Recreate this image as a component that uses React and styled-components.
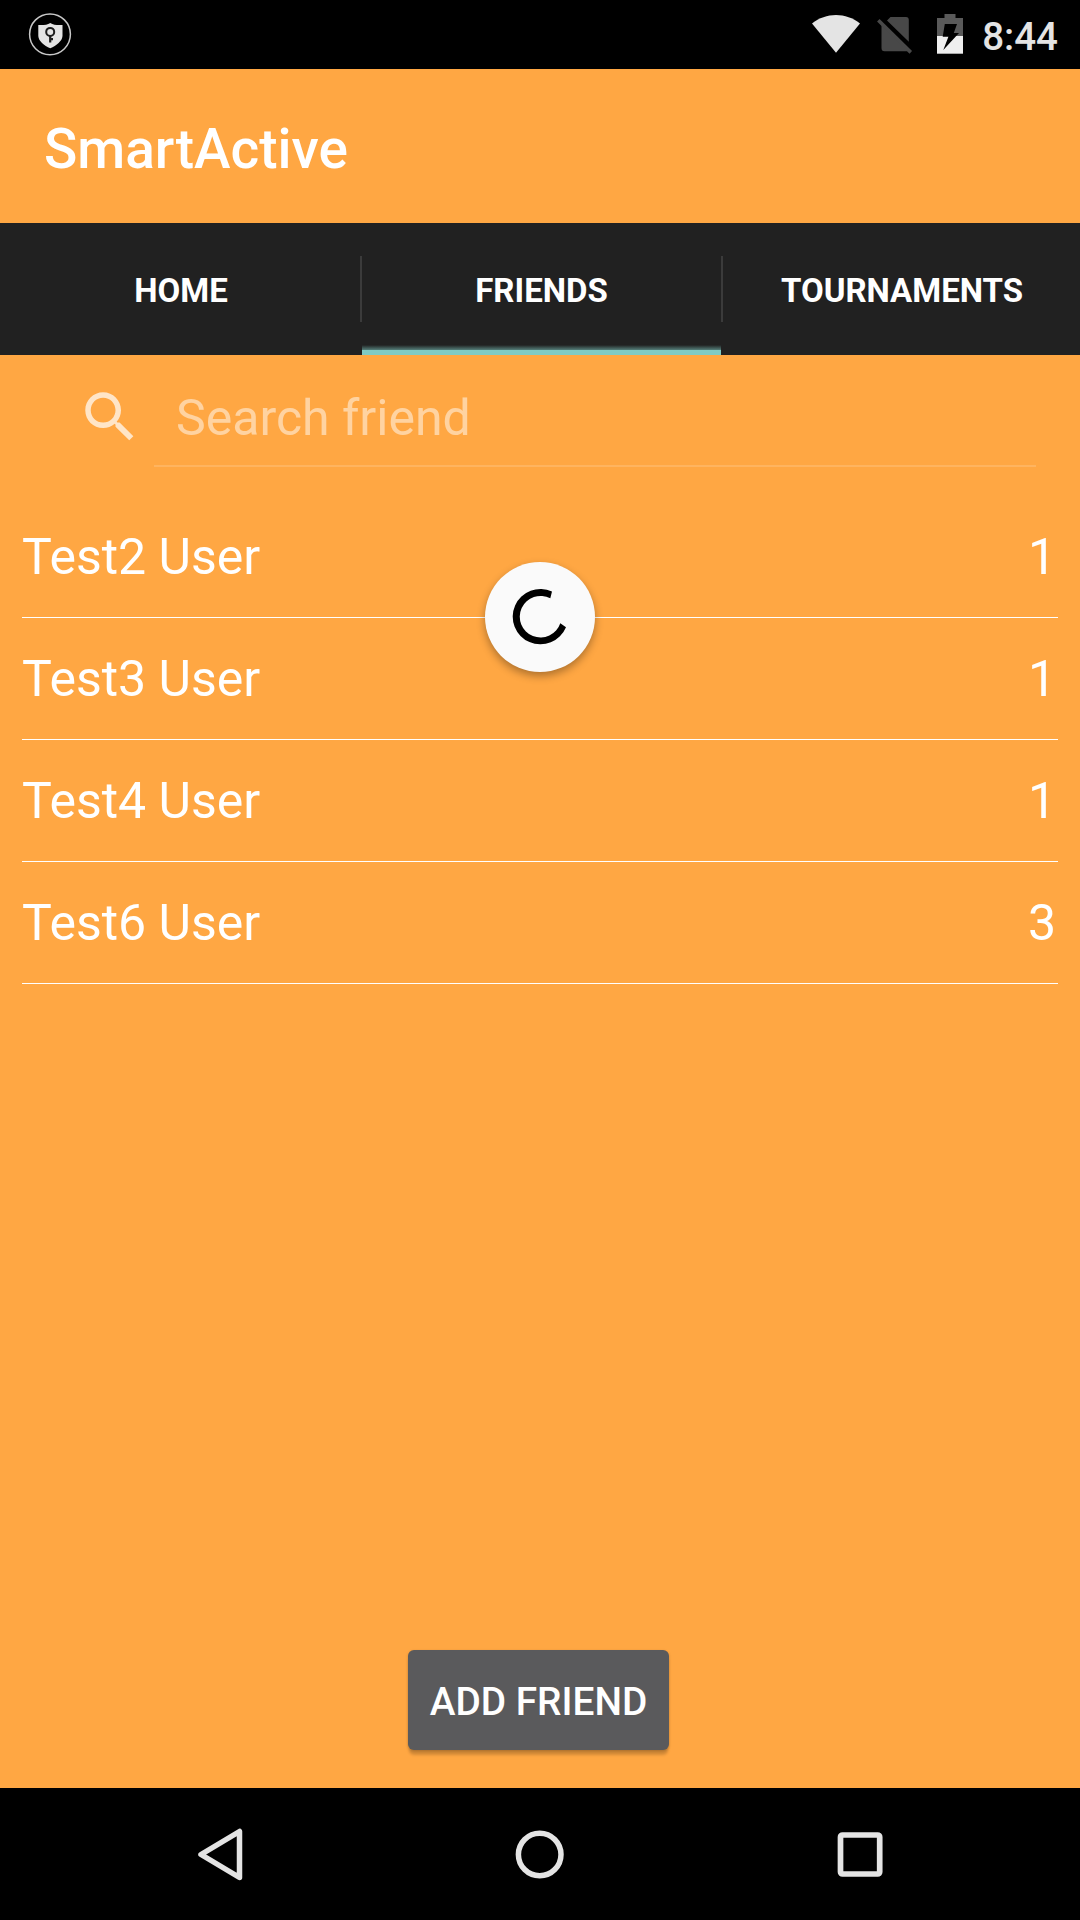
import React from "react";
import styled, { createGlobalStyle } from "styled-components";

const GlobalStyle = createGlobalStyle`
  * { box-sizing: border-box; }
  body { margin: 0; background: #000; font-family: Roboto, "Liberation Sans", sans-serif; }
  svg { display: block; flex: none; }
`;

const Screen = styled.div`
  width: 1080px;
  height: 1920px;
  display: flex;
  flex-direction: column;
  background: #ffa743;
  color: #fff;
  overflow: hidden;
`;

const StatusBar = styled.header`
  height: 69px;
  flex: none;
  display: flex;
  align-items: flex-start;
  justify-content: space-between;
  padding: 12px 22px 0 28px;
  background: #000;
`;

const StatusIcons = styled.div`
  display: flex;
  align-items: flex-start;
`;

const Clock = styled.time`
  margin-left: 17px;
  padding-top: 2px;
  font-size: 38.5px;
  font-weight: 500;
  line-height: 45px;
  color: #e4e4e4;
`;

const Toolbar = styled.div`
  height: 154px;
  flex: none;
  display: flex;
  align-items: center;
  padding: 6px 44px 0;
  background: #ffa743;
`;

const Title = styled.h1`
  margin: 0;
  font-size: 55px;
  font-weight: 500;
  line-height: 64px;
`;

const Tabs = styled.nav`
  height: 132px;
  flex: none;
  display: flex;
  align-items: center;
  background: #212121;
`;

const Tab = styled.button`
  width: ${(p) => p.$width}px;
  height: 132px;
  border: 0;
  padding: 4px 0 0 ${(p) => p.$inset || 0}px;
  font: 700 33px/38px Roboto, "Liberation Sans", sans-serif;
  color: #fff;
  background: ${(p) =>
    p.$active
      ? "linear-gradient(to bottom, #212121 122px, #55807b 127px, #80cbc4 127px)"
      : "transparent"};
`;

const Divider = styled.span`
  width: 2px;
  height: 66px;
  flex: none;
  background: #3b3b3b;
`;

const Content = styled.main`
  flex: 1;
  display: flex;
  flex-direction: column;
  position: relative;
`;

const SearchRow = styled.label`
  height: 112px;
  display: flex;
  align-items: flex-start;
  padding: 0 44px 0 77px;
`;

const SearchIcon = styled.svg`
  width: 66px;
  height: 66px;
  margin-top: 29px;
`;

const SearchInput = styled.input`
  flex: 1;
  min-width: 0;
  height: 112px;
  margin-left: 11px;
  padding: 17px 22px 2px;
  border: 0;
  border-bottom: 2px solid rgba(255, 255, 255, 0.15);
  background: transparent;
  outline: none;
  font: 400 50px/58px Roboto, "Liberation Sans", sans-serif;
  color: #fff;
  &::placeholder { color: rgba(255, 255, 255, 0.5); opacity: 1; }
`;

const FriendList = styled.ul`
  list-style: none;
  margin: 29px 22px 0;
  padding: 0;
`;

const FriendRow = styled.li`
  height: 122px;
  display: flex;
  align-items: center;
  justify-content: space-between;
  padding: 0 2px 0 0;
  border-bottom: 1px solid #fff;
  font-size: 50px;
  line-height: 58px;
`;

const RefreshDisc = styled.div`
  position: absolute;
  top: 207px;
  left: 485px;
  width: 110px;
  height: 110px;
  border-radius: 50%;
  background: #fafafa;
  box-shadow: 0 4px 9px rgba(0, 0, 0, 0.32);
`;

const ButtonRow = styled.div`
  margin-top: auto;
  padding: 0 3px 38px 0;
  display: flex;
  justify-content: center;
`;

const AddButton = styled.button`
  width: 261px;
  height: 100px;
  padding: 2px 0 0;
  border: 0;
  border-radius: 6px;
  background: #5a5a5c;
  box-shadow: 0 6px 3px -1px rgba(0, 0, 0, 0.18), 0 1px 3px rgba(0, 0, 0, 0.2);
  font: 500 38.8px/45px Roboto, "Liberation Sans", sans-serif;
  color: #fff;
  white-space: nowrap;
`;

const NavBar = styled.footer`
  height: 132px;
  flex: none;
  display: flex;
  align-items: center;
  justify-content: space-between;
  padding: 0 180px;
  background: #000;
`;

const friends = [
  { name: "Test2 User", count: 1 },
  { name: "Test3 User", count: 1 },
  { name: "Test4 User", count: 1 },
  { name: "Test6 User", count: 3 },
];

function VpnIcon() {
  return (
    <svg width="44" height="44" viewBox="28 12 44 44">
      <circle cx="50" cy="34.3" r="20.4" fill="none" stroke="#c8c8c8" strokeWidth="1.5" />
      <path d="M50.3 23C47 25 43 25.300 38.300 25V36C38.500 41 44 45.500 50.300 48.300C56.500 45.500 62.300 41 62.500 36V25C57.500 25.300 53.500 25 50.300 23Z" fill="#e4e4e4" />
      <circle cx="50.200" cy="31.900" r="4" fill="none" stroke="#1c1c1c" strokeWidth="2" />
      <path d="M50.200 35.500V42.500M50.200 39.200H53" stroke="#1c1c1c" strokeWidth="2.200" fill="none" />
    </svg>
  );
}

function SignalIcons() {
  return (
    <svg width="153" height="44" viewBox="812 12 153 44">
      <path d="M812 23.500C826 12 846 12 860 23.500L836 52.700Z" fill="#e4e4e4" />
      <path d="M890.500 17H906Q908.800 17 908.800 20V41.800L887 20.400ZM881.500 25L908 51Q906.800 51.200 905 51.200H884.500Q881.500 51.200 881.500 48Z" fill="#484848" />
      <path d="M878.300 20.300L910.800 52.400" stroke="#484848" strokeWidth="3.600" />
      <path d="M944.500 14H955.500V18H963V36H937V18H944.500Z" fill="#5a5a5a" />
      <path d="M937 36H963V53.700H937Z" fill="#efefef" />
      <path d="M944.800 24H957L953.800 33H959L943.300 50L948.400 36.800H942.700Z" fill="#000" />
    </svg>
  );
}

export default function App() {
  return (
    <>
      <GlobalStyle />
      <Screen>
        <StatusBar>
          <VpnIcon />
          <StatusIcons>
            <SignalIcons />
            <Clock>8:44</Clock>
          </StatusIcons>
        </StatusBar>
        <Toolbar>
          <Title>SmartActive</Title>
        </Toolbar>
        <Tabs>
          <Tab $width={360} $inset={2}>HOME</Tab>
          <Divider />
          <Tab $width={359} $active>FRIENDS</Tab>
          <Divider />
          <Tab $width={357} $inset={1}>TOURNAMENTS</Tab>
        </Tabs>
        <Content>
          <SearchRow>
            <SearchIcon viewBox="0 0 24 24">
              <path
                fill="#fff"
                fillOpacity="0.7"
                d="M15.5 14h-.79l-.28-.27C15.410 12.590 16 11.110 16 9.500 16 5.910 13.090 3 9.500 3S3 5.910 3 9.500 5.910 16 9.500 16c1.610 0 3.090-.59 4.230-1.570l.27.28v.79l5 4.990L20.490 19l-4.990-5zm-6 0C7.010 14 5 11.990 5 9.500S7.010 5 9.500 5 14 7.010 14 9.500 11.990 14 9.500 14z"
              />
            </SearchIcon>
            <SearchInput placeholder="Search friend" />
          </SearchRow>
          <FriendList>
            {friends.map((f) => (
              <FriendRow key={f.name}>
                <span>{f.name}</span>
                <span>{f.count}</span>
              </FriendRow>
            ))}
          </FriendList>
          <RefreshDisc>
            <svg width="110" height="110" viewBox="0 0 110 110">
              <path d="M67 29.500A27.700 27.700 0 1 0 81 65.300L75.300 61.300A20.800 20.800 0 1 1 65.300 36.300Z" fill="#000" />
            </svg>
          </RefreshDisc>
          <ButtonRow>
            <AddButton>ADD FRIEND</AddButton>
          </ButtonRow>
        </Content>
        <NavBar>
          <svg width="80" height="80" viewBox="180 1814 80 80">
            <path d="M239.500 1831.500V1877.500L201 1854.500Z" fill="none" stroke="#e4e4e4" strokeWidth="5.500" strokeLinejoin="round" />
          </svg>
          <svg width="80" height="80" viewBox="500 1814 80 80">
            <circle cx="539.700" cy="1854.500" r="21.300" fill="none" stroke="#e4e4e4" strokeWidth="5.500" />
          </svg>
          <svg width="80" height="80" viewBox="820 1814 80 80">
            <rect x="840.500" y="1835" width="39.200" height="39" rx="2" fill="none" stroke="#e4e4e4" strokeWidth="5.700" />
          </svg>
        </NavBar>
      </Screen>
    </>
  );
}
